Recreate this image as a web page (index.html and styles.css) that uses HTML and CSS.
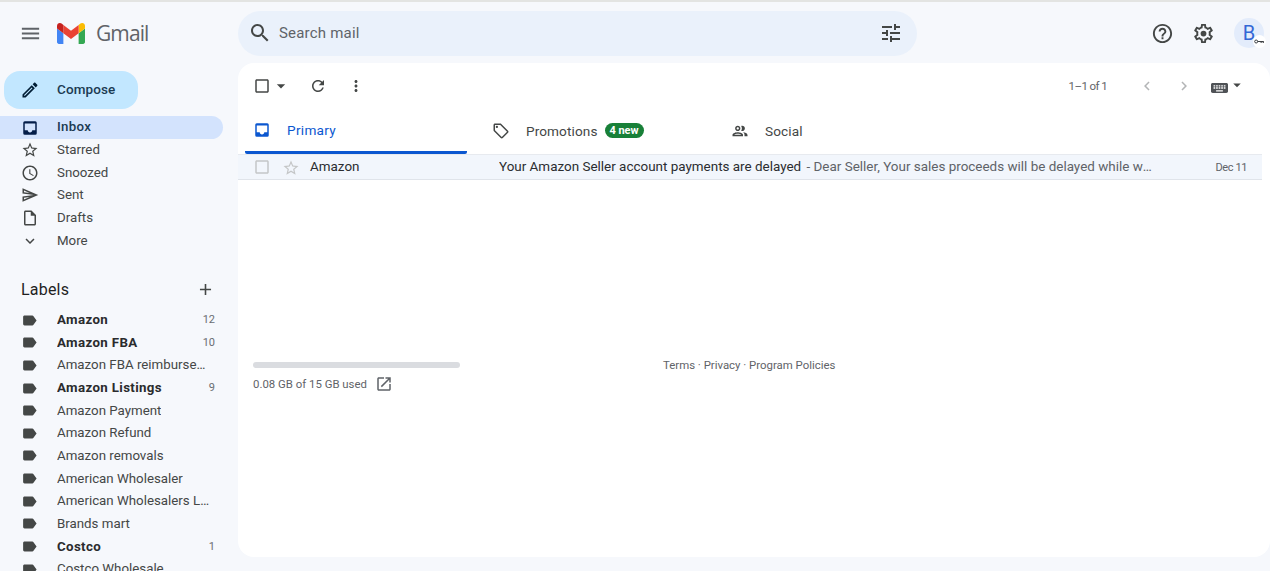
FILE: index.html
```html
<!DOCTYPE html>
<html lang="en">
<head>
<meta charset="utf-8">
<title>Inbox - Gmail</title>
<link rel="stylesheet" href="styles.css">
</head>
<body>
<svg class="defs" width="0" height="0" aria-hidden="true">
  <defs>
    <symbol id="i-menu" viewBox="0 0 24 24"><path d="M3 18h18v-2H3v2zm0-5h18v-2H3v2zm0-7v2h18V6H3z"/></symbol>
    <symbol id="i-search" viewBox="0 0 24 24"><path d="M15.5 14h-.79l-.28-.27C15.41 12.59 16 11.11 16 9.5 16 5.91 13.09 3 9.5 3S3 5.91 3 9.5 5.91 16 9.5 16c1.61 0 3.09-.59 4.23-1.57l.27.28v.79l5 4.99L20.49 19l-4.99-5zm-6 0C7.01 14 5 11.99 5 9.5S7.01 5 9.5 5 14 7.01 14 9.5 11.99 14 9.5 14z"/></symbol>
    <symbol id="i-tune" viewBox="0 0 24 24"><path d="M3 17v2h6v-2H3zM3 5v2h10V5H3zm10 16v-2h8v-2h-8v-2h-2v6h2zM7 9v2H3v2h4v2h2V9H7zm14 4v-2H11v2h10zm-6-4h2V7h4V5h-4V3h-2v6z"/></symbol>
    <symbol id="i-help" viewBox="0 0 24 24"><path d="M11 18h2v-2h-2v2zm1-16C6.48 2 2 6.48 2 12s4.48 10 10 10 10-4.48 10-10S17.52 2 12 2zm0 18c-4.41 0-8-3.59-8-8s3.59-8 8-8 8 3.59 8 8-3.59 8-8 8zm0-14c-2.21 0-4 1.79-4 4h2c0-1.1.9-2 2-2s2 .9 2 2c0 2-3 1.75-3 5h2c0-2.25 3-2.5 3-5 0-2.21-1.79-4-4-4z"/></symbol>
    <symbol id="i-gear" viewBox="0 0 24 24"><path d="M19.43 12.98c.04-.32.07-.64.07-.98 0-.34-.03-.66-.07-.98l2.11-1.65c.19-.15.24-.42.12-.64l-2-3.46c-.09-.16-.26-.25-.44-.25-.06 0-.12.01-.17.03l-2.49 1c-.52-.4-1.08-.73-1.69-.98l-.38-2.65C14.46 2.18 14.25 2 14 2h-4c-.25 0-.46.18-.49.42l-.38 2.65c-.61.25-1.17.59-1.69.98l-2.49-1c-.06-.02-.12-.03-.18-.03-.17 0-.34.09-.43.25l-2 3.46c-.13.22-.07.49.12.64l2.11 1.65c-.04.32-.07.65-.07.98 0 .33.03.66.07.98l-2.11 1.65c-.19.15-.24.42-.12.64l2 3.46c.09.16.26.25.44.25.06 0 .12-.01.17-.03l2.49-1c.52.4 1.08.73 1.69.98l.38 2.65c.03.24.24.42.49.42h4c.25 0 .46-.18.49-.42l.38-2.65c.61-.25 1.17-.59 1.69-.98l2.49 1c.06.02.12.03.18.03.17 0 .34-.09.43-.25l2-3.46c.12-.22.07-.49-.12-.64l-2.11-1.65zm-1.98-1.71c.04.31.05.52.05.73 0 .21-.02.43-.05.73l-.14 1.13.89.7 1.08.84-.7 1.21-1.27-.51-1.04-.42-.9.68c-.43.32-.84.56-1.25.73l-1.06.43-.16 1.13-.2 1.35h-1.4l-.19-1.35-.16-1.13-1.06-.43c-.43-.18-.83-.41-1.23-.71l-.91-.7-1.06.43-1.27.51-.7-1.21 1.08-.84.89-.7-.14-1.13c-.03-.31-.05-.54-.05-.74s.02-.43.05-.73l.14-1.13-.89-.7-1.08-.84.7-1.21 1.27.51 1.04.42.9-.68c.43-.32.84-.56 1.25-.73l1.06-.43.16-1.13.2-1.35h1.39l.19 1.35.16 1.13 1.06.43c.43.18.83.41 1.23.71l.91.7 1.06-.43 1.27-.51.7 1.21-1.07.85-.89.7.14 1.13z"/><circle cx="12" cy="12" r="3"/></symbol>
    <symbol id="i-edit" viewBox="0 0 24 24"><path d="M14.06 9.02l.92.92L5.92 19H5v-.92l9.06-9.06M17.66 3c-.25 0-.51.1-.7.29l-1.83 1.83 3.75 3.75 1.83-1.83c.39-.39.39-1.02 0-1.41l-2.34-2.34c-.2-.2-.45-.29-.71-.29zm-3.6 3.19L3 17.25V21h3.75L17.81 9.94l-3.75-3.75z"/></symbol>
    <symbol id="i-inbox" viewBox="0 0 24 24"><path fill-rule="evenodd" d="M19 3H5a2 2 0 0 0-2 2v14a2 2 0 0 0 2 2h14a2 2 0 0 0 2-2V5a2 2 0 0 0-2-2zM19 6v9h-4c0 1.66-1.35 3-3 3s-3-1.34-3-3H5V6z"/></symbol>
    <symbol id="i-star" viewBox="0 0 24 24"><path d="M22 9.24l-7.19-.62L12 2 9.19 8.63 2 9.24l5.46 4.73L5.82 21 12 17.27 18.18 21l-1.63-7.03L22 9.24zM12 15.4l-3.76 2.27 1-4.28-3.32-2.88 4.38-.38L12 6.1l1.71 4.04 4.38.38-3.32 2.88 1 4.28L12 15.4z"/></symbol>
    <symbol id="i-clock" viewBox="0 0 24 24"><path d="M11.99 2C6.47 2 2 6.48 2 12s4.47 10 9.99 10C17.52 22 22 17.52 22 12S17.52 2 11.99 2zM12 20c-4.42 0-8-3.58-8-8s3.58-8 8-8 8 3.58 8 8-3.58 8-8 8zM12.5 7H11v6l5.25 3.15.75-1.23-4.5-2.67z"/></symbol>
    <symbol id="i-send" viewBox="0 0 24 24"><path d="M4.01 6.03l7.51 3.22-7.52-1 .01-2.22m7.5 8.72L4 17.97v-2.22l7.51-1M2.01 3L2 10l15 2-15 2 .01 7L23 12 2.01 3z"/></symbol>
    <symbol id="i-draft" viewBox="0 0 24 24"><path d="M14 2H6c-1.1 0-2 .9-2 2v16c0 1.1.89 2 1.99 2H18c1.1 0 2-.9 2-2V8l-6-6zM6 20V4h7v5h5v11H6z"/></symbol>
    <symbol id="i-more" viewBox="0 0 24 24"><path d="M16.59 8.59L12 13.17 7.41 8.59 6 10l6 6 6-6z"/></symbol>
    <symbol id="i-plus" viewBox="0 0 24 24"><path d="M19 13h-6v6h-2v-6H5v-2h6V5h2v6h6v2z"/></symbol>
    <symbol id="i-label" viewBox="0 0 24 24"><path d="M17.63 5.84C17.27 5.33 16.67 5 16 5L5 5.01C3.9 5.01 3 5.9 3 7v10c0 1.1.9 1.99 2 1.99L16 19c.67 0 1.27-.33 1.63-.84L22 12l-4.37-6.16z"/></symbol>
    <symbol id="i-refresh" viewBox="0 0 24 24"><path d="M17.65 6.35C16.2 4.9 14.21 4 12 4c-4.42 0-7.99 3.58-7.99 8s3.57 8 7.99 8c3.73 0 6.84-2.55 7.73-6h-2.08c-.82 2.33-3.04 4-5.65 4-3.31 0-6-2.69-6-6s2.69-6 6-6c1.66 0 3.14.69 4.22 1.78L13 11h7V4l-2.35 2.35z"/></symbol>
    <symbol id="i-vert" viewBox="0 0 24 24"><path d="M12 8c1.1 0 2-.9 2-2s-.9-2-2-2-2 .9-2 2 .9 2 2 2zm0 2c-1.1 0-2 .9-2 2s.9 2 2 2 2-.9 2-2-.9-2-2-2zm0 6c-1.1 0-2 .9-2 2s.9 2 2 2 2-.9 2-2-.9-2-2-2z"/></symbol>
    <symbol id="i-check" viewBox="0 0 24 24"><path d="M19 5v14H5V5h14m0-2H5c-1.1 0-2 .9-2 2v14c0 1.1.9 2 2 2h14c1.1 0 2-.9 2-2V5c0-1.1-.9-2-2-2z"/></symbol>
    <symbol id="i-drop" viewBox="0 0 24 24"><path d="M7 10l5 5 5-5z"/></symbol>
    <symbol id="i-left" viewBox="0 0 24 24"><path d="M15.41 7.41L14 6l-6 6 6 6 1.41-1.41L10.83 12z"/></symbol>
    <symbol id="i-right" viewBox="0 0 24 24"><path d="M10 6L8.59 7.41 13.17 12l-4.58 4.59L10 18l6-6z"/></symbol>
    <symbol id="i-keyboard" viewBox="2 5 20 14" preserveAspectRatio="none"><path d="M20 5H4c-1.1 0-1.99.9-1.99 2L2 17c0 1.1.9 2 2 2h16c1.1 0 2-.9 2-2V7c0-1.1-.9-2-2-2zm-9 3h2v2h-2V8zm0 3h2v2h-2v-2zM8 8h2v2H8V8zm0 3h2v2H8v-2zm-1 2H5v-2h2v2zm0-3H5V8h2v2zm9 7H8v-2h8v2zm0-4h-2v-2h2v2zm0-3h-2V8h2v2zm3 3h-2v-2h2v2zm0-3h-2V8h2v2z"/></symbol>
    <symbol id="i-tag" viewBox="0 0 24 24"><path d="M21.41 11.58l-9-9C12.05 2.22 11.55 2 11 2H4c-1.1 0-2 .9-2 2v7c0 .55.22 1.05.59 1.42l9 9c.36.36.86.58 1.41.58.55 0 1.05-.22 1.41-.59l7-7c.37-.36.59-.86.59-1.41 0-.55-.23-1.06-.59-1.42zM13 20.01L4 11V4h7v-.01l9 9-7 7.02z"/><circle cx="6.5" cy="6.5" r="1.5"/></symbol>
    <symbol id="i-people" viewBox="0 0 24 24"><path d="M9 13.75c-2.34 0-7 1.17-7 3.5V19h14v-1.75c0-2.33-4.66-3.5-7-3.5zM4.34 17c.84-.58 2.87-1.25 4.66-1.25s3.82.67 4.66 1.25H4.34zM9 12c1.93 0 3.5-1.57 3.5-3.5S10.93 5 9 5 5.5 6.57 5.5 8.5 7.07 12 9 12zm0-5c.83 0 1.5.67 1.5 1.5S9.83 10 9 10s-1.5-.67-1.5-1.5S8.17 7 9 7zm7.04 6.81c1.16.84 1.96 1.96 1.96 3.44V19h4v-1.75c0-2.02-3.5-3.17-5.96-3.44zM15 12c1.93 0 3.5-1.57 3.5-3.5S16.93 5 15 5c-.54 0-1.04.13-1.5.35.63.89 1 1.98 1 3.15s-.37 2.26-1 3.15c.46.22.96.35 1.5.35z"/></symbol>
    <symbol id="i-open" viewBox="0 0 24 24"><path d="M19 19H5V5h7V3H5c-1.11 0-2 .9-2 2v14c0 1.1.89 2 2 2h14c1.1 0 2-.9 2-2v-7h-2v7zM14 3v2h3.59l-9.83 9.83 1.41 1.41L19 6.41V10h2V3h-7z"/></symbol>
  </defs>
</svg>

<div class="app">
  <aside class="sidebar">
    <div class="brand">
      <svg class="ic-menu"><use href="#i-menu"/></svg>
      <svg class="logo" viewBox="52 42 88 66" aria-label="Gmail logo">
        <path fill="#4285f4" d="M58 108h14V74L52 59v43c0 3.32 2.69 6 6 6"/>
        <path fill="#34a853" d="M120 108h14c3.32 0 6-2.69 6-6V59l-20 15"/>
        <path fill="#fbbc04" d="M120 48v26l20-15v-8c0-7.42-8.47-11.65-14.4-7.2"/>
        <path fill="#ea4335" d="M72 74V48l24 18 24-18v26L96 92"/>
        <path fill="#c5221f" d="M52 51v8l20 15V48l-5.6-4.2c-5.94-4.45-14.4-.22-14.4 7.2"/>
      </svg>
      <span class="wordmark">Gmail</span>
    </div>
    <button class="compose">
      <svg class="ic-edit"><use href="#i-edit"/></svg>
      <span>Compose</span>
    </button>
    <nav class="nav">
      <a class="nav-row active"><svg class="ic"><use href="#i-inbox"/></svg><span>Inbox</span></a>
      <a class="nav-row"><svg class="ic"><use href="#i-star"/></svg><span>Starred</span></a>
      <a class="nav-row"><svg class="ic"><use href="#i-clock"/></svg><span>Snoozed</span></a>
      <a class="nav-row"><svg class="ic"><use href="#i-send"/></svg><span>Sent</span></a>
      <a class="nav-row"><svg class="ic"><use href="#i-draft"/></svg><span>Drafts</span></a>
      <a class="nav-row nav-more"><svg class="ic"><use href="#i-more"/></svg><span>More</span></a>
    </nav>
    <div class="labels-head">
      <span>Labels</span>
      <svg class="ic-plus"><use href="#i-plus"/></svg>
    </div>
    <div class="labels">
      <a class="label-row bold"><svg class="ic"><use href="#i-label"/></svg><span class="label-name">Amazon</span><span class="count">12</span></a>
      <a class="label-row bold"><svg class="ic"><use href="#i-label"/></svg><span class="label-name">Amazon FBA</span><span class="count">10</span></a>
      <a class="label-row"><svg class="ic"><use href="#i-label"/></svg><span class="label-name">Amazon FBA reimbursement</span></a>
      <a class="label-row bold"><svg class="ic"><use href="#i-label"/></svg><span class="label-name">Amazon Listings</span><span class="count">9</span></a>
      <a class="label-row"><svg class="ic"><use href="#i-label"/></svg><span class="label-name">Amazon Payment</span></a>
      <a class="label-row"><svg class="ic"><use href="#i-label"/></svg><span class="label-name">Amazon Refund</span></a>
      <a class="label-row"><svg class="ic"><use href="#i-label"/></svg><span class="label-name">Amazon removals</span></a>
      <a class="label-row"><svg class="ic"><use href="#i-label"/></svg><span class="label-name">American Wholesaler</span></a>
      <a class="label-row"><svg class="ic"><use href="#i-label"/></svg><span class="label-name">American Wholesalers List</span></a>
      <a class="label-row"><svg class="ic"><use href="#i-label"/></svg><span class="label-name">Brands mart</span></a>
      <a class="label-row bold"><svg class="ic"><use href="#i-label"/></svg><span class="label-name">Costco</span><span class="count">1</span></a>
      <a class="label-row"><svg class="ic"><use href="#i-label"/></svg><span class="label-name">Costco Wholesale</span></a>
    </div>
  </aside>

  <div class="content">
    <header class="topbar">
      <div class="search">
        <svg class="ic-search"><use href="#i-search"/></svg>
        <span class="search-text">Search mail</span>
        <svg class="ic-tune"><use href="#i-tune"/></svg>
      </div>
      <div class="top-actions">
        <svg class="ic-top"><use href="#i-help"/></svg>
        <svg class="ic-top"><use href="#i-gear"/></svg>
        <div class="avatar">B
          <span class="key-badge">
            <svg viewBox="0 0 12 6" class="key"><circle cx="2.6" cy="3" r="1.8" fill="none" stroke="currentColor" stroke-width="1.2"/><path d="M4.3 2.3H11.8V4.8H10.4V3.6H9.2V4.8H7.9V3.6H4.3z"/></svg>
          </span>
        </div>
      </div>
    </header>

    <main class="card">
      <div class="toolbar">
        <div class="tools">
          <svg class="ic-check"><use href="#i-check"/></svg>
          <svg class="ic-drop"><use href="#i-drop"/></svg>
          <svg class="ic-tool refresh"><use href="#i-refresh"/></svg>
          <svg class="ic-tool vert"><use href="#i-vert"/></svg>
        </div>
        <div class="pager">
          <span class="pager-text">1–1 of 1</span>
          <svg class="ic-chev first"><use href="#i-left"/></svg>
          <svg class="ic-chev"><use href="#i-right"/></svg>
          <svg class="ic-kbd"><use href="#i-keyboard"/></svg>
          <svg class="kbd-drop"><use href="#i-drop"/></svg>
        </div>
      </div>

      <div class="tabs">
        <div class="tab tab-primary"><svg class="ic"><use href="#i-inbox"/></svg><span>Primary</span></div>
        <div class="tab tab-promo"><svg class="ic"><use href="#i-tag"/></svg><span>Promotions</span><span class="badge">4 new</span></div>
        <div class="tab tab-social"><svg class="ic"><use href="#i-people"/></svg><span>Social</span></div>
      </div>

      <div class="mail-row">
        <svg class="ic-check row-check"><use href="#i-check"/></svg>
        <svg class="row-star"><use href="#i-star"/></svg>
        <span class="sender">Amazon</span>
        <span class="summary"><span class="subject">Your Amazon Seller account payments are delayed</span><span class="snippet"> - Dear Seller, Your sales proceeds will be delayed while we review</span></span>
        <span class="date">Dec 11</span>
      </div>

      <footer class="foot">
        <div class="storage">
          <div class="bar"></div>
          <div class="used"><span>0.08 GB of 15 GB used</span><svg class="ic-open"><use href="#i-open"/></svg></div>
        </div>
        <div class="terms">Terms · Privacy · Program Policies</div>
      </footer>
    </main>
  </div>
</div>
</body>
</html>
```

FILE: styles.css
```css
* { box-sizing: border-box; }
html, body { height: 100%; margin: 0; }
body {
  overflow: hidden;
  background: #f6f8fc;
  border-top: 2px solid #e3e4e2;
  font-family: Roboto, "Liberation Sans", sans-serif;
  font-size: 14px;
  color: #202124;
}
.defs { position: absolute; }
svg { display: block; flex: none; fill: currentColor; }
.app { display: flex; height: 569px; }

/* Sidebar */
.sidebar { width: 238px; flex: none; overflow: hidden; color: #444746; }
.brand { display: flex; align-items: center; height: 61px; padding: 1px 0 0 19px; }
.ic-menu { width: 23px; height: 23px; margin-right: 15px; color: #5f6368; }
.logo { width: 28px; height: 21px; margin-right: 11px; }
.wordmark { font-family: "Open Sans", Roboto, sans-serif; font-size: 21px; letter-spacing: -0.9px; color: #5f6368; }
.compose {
  display: flex; align-items: center;
  width: 134px; height: 38px; margin: 8px 0 7px 4px; padding: 0 0 2px 16px;
  border: 0; border-radius: 16px;
  background: #c2e7ff; color: #1b3a52;
  font: 500 13.5px Roboto, sans-serif;
  letter-spacing: .1px;
}
.ic-edit { width: 20px; height: 20px; margin: 2px 17px 0 0; color: #001d35; }
.nav { display: flex; flex-direction: column; padding-right: 15px; }
.nav-row, .label-row {
  display: flex; align-items: center;
  height: 22.5px; padding: 0 0 1px 21px;
  font-size: 13.3px;
}
.nav-row .ic { width: 18px; height: 18px; margin: 1px 18px 0 0; }
.nav-row.active { height: 23px; padding-bottom: 2px; background: #d3e3fd; border-radius: 0 12px 12px 0; color: #1b3a52; font-weight: 500; letter-spacing: .3px; }
.nav-row.active .ic { margin-top: 2px; color: #041e49; }
.nav-more { margin-top: 1px; }
.labels-head {
  display: flex; justify-content: space-between; align-items: center;
  height: 24px; margin-top: 24.5px; padding: 0 23px 0 21px;
  font-size: 16px; color: #1f1f1f; letter-spacing: .2px;
}
.ic-plus { width: 19px; height: 19px; color: #444746; }
.labels { margin-top: 7.8px; padding-right: 23px; }
.label-row { height: 22.65px; }
.label-row .ic { width: 17px; height: 17px; margin: 1px 19px 0 0; color: #444746; }
.label-name { max-width: 153px; min-width: 0; overflow: hidden; white-space: nowrap; text-overflow: ellipsis; }
.label-row.bold { font-weight: 700; color: #2a2b2d; letter-spacing: .35px; }
.count { margin-left: auto; font-size: 11px; font-weight: 400; letter-spacing: 0; color: #6a6e72; }

/* Content column */
.content { flex: 1; min-width: 0; display: flex; flex-direction: column; }
.topbar { display: flex; align-items: center; height: 61px; flex: none; padding-top: 1px; }
.search {
  display: flex; align-items: center;
  width: 679px; height: 45px; padding: 0 14px 0 10px;
  background: #eaf1fb; border-radius: 23px; color: #444746;
}
.ic-search { width: 24px; height: 24px; margin-right: 7px; }
.search-text { flex: 1; font-size: 15px; color: #5f6368; letter-spacing: .2px; }
.ic-tune { width: 24px; height: 24px; }
.top-actions { display: flex; align-items: center; margin-left: auto; padding-right: 6px; color: #444746; }
.ic-top { width: 23px; height: 23px; margin-right: 18px; }
.avatar {
  position: relative; width: 30px; height: 30px; margin-left: 1px;
  border-radius: 50%; background: #e3ecfb;
  display: flex; align-items: center; justify-content: center;
  font-size: 20px; color: #3367d6;
}
.key-badge {
  position: absolute; right: -1.5px; bottom: 0; width: 13px; height: 13px;
  border-radius: 50%; background: #fff;
  display: flex; align-items: center; justify-content: center;
}
.key { width: 10px; height: 5px; color: #3c4043; }

/* Card */
.card {
  height: 494px; flex: none;
  display: flex; flex-direction: column;
  background: #fff; border-radius: 16px;
  color: #202124;
}
.toolbar { display: flex; justify-content: space-between; align-items: center; height: 46px; flex: none; color: #444746; }
.tools { display: flex; align-items: center; padding-left: 15px; }
.ic-check { width: 18px; height: 18px; }
.ic-drop { width: 20px; height: 20px; }
.ic-tool { width: 18px; height: 18px; }
.refresh { margin-left: 18px; }
.vert { margin-left: 20px; }
.pager { display: flex; align-items: center; padding-right: 24px; }
.pager-text { font-size: 11.5px; letter-spacing: -.6px; color: #5f6368; margin-right: 31px; }
.ic-chev { width: 18px; height: 18px; color: #b3b5b6; }
.first { margin-right: 19px; }
.ic-kbd { width: 17px; height: 10px; margin-left: 18px; margin-top: 3px; color: #4f5256; }
.kbd-drop { width: 18px; height: 18px; margin-top: -3px; color: #444746; }

.tabs { display: flex; height: 45px; flex: none; padding-left: 7px; }
.tab { display: flex; align-items: center; height: 45px; font-size: 13.6px; letter-spacing: .1px; color: #444746; padding-bottom: 2px; }
.tab .ic { width: 18px; height: 18px; }
.tab-primary { width: 222px; padding-left: 8px; border-bottom: 3px solid #0b57d0; border-radius: 0 0 2px 2px; color: #0b57d0; letter-spacing: .3px; padding-bottom: 0; }
.tab-primary .ic { margin-right: 16px; }
.tab-promo { width: 256px; padding-left: 25px; }
.tab-promo .ic { margin-right: 16px; }
.tab-social { padding-left: 8px; }
.tab-social .ic { margin-right: 16px; }
.badge {
  margin-left: 7px; width: 39px; height: 15px;
  display: flex; align-items: center; justify-content: center;
  background: #188038; color: #fff; border-radius: 8px;
  font-size: 11px; font-weight: 700; letter-spacing: 0;
}

.mail-row {
  display: flex; align-items: center; flex: none;
  height: 26px; margin-right: 8px; padding-left: 15px;
  background: #f2f6fc;
  border-top: 1px solid #e7eaef; border-bottom: 1px solid #e0e4ea;
  font-size: 13.45px;
}
.row-check { color: #c4c6c7; }
.row-star { width: 18px; height: 18px; margin-left: 11px; margin-top: 1px; color: #c4c6c7; }
.sender { width: 189px; margin: 0 0 1px 10px; flex: none; color: #2b2d30; }
.summary { width: 656px; flex: none; margin-bottom: 1px; overflow: hidden; white-space: nowrap; text-overflow: ellipsis; color: #5f6368; }
.subject { color: #2b2d30; }
.snippet { margin-left: 2px; }
.date { margin-left: auto; padding-right: 15px; font-size: 11px; letter-spacing: -.4px; color: #5f6368; }

.foot { display: flex; padding: 182px 0 0 15px; flex: none; color: #5f6368; font-size: 11.4px; }
.storage { width: 207px; flex: none; }
.bar { height: 6px; border-radius: 3px; background: #dadce0; }
.used { display: flex; align-items: center; margin-top: 7px; height: 18px; }
.ic-open { width: 18px; height: 18px; margin-left: 8px; color: #5f6368; }
.terms { margin-left: 203px; margin-top: -4px; height: 14px; line-height: 14px; }
```
